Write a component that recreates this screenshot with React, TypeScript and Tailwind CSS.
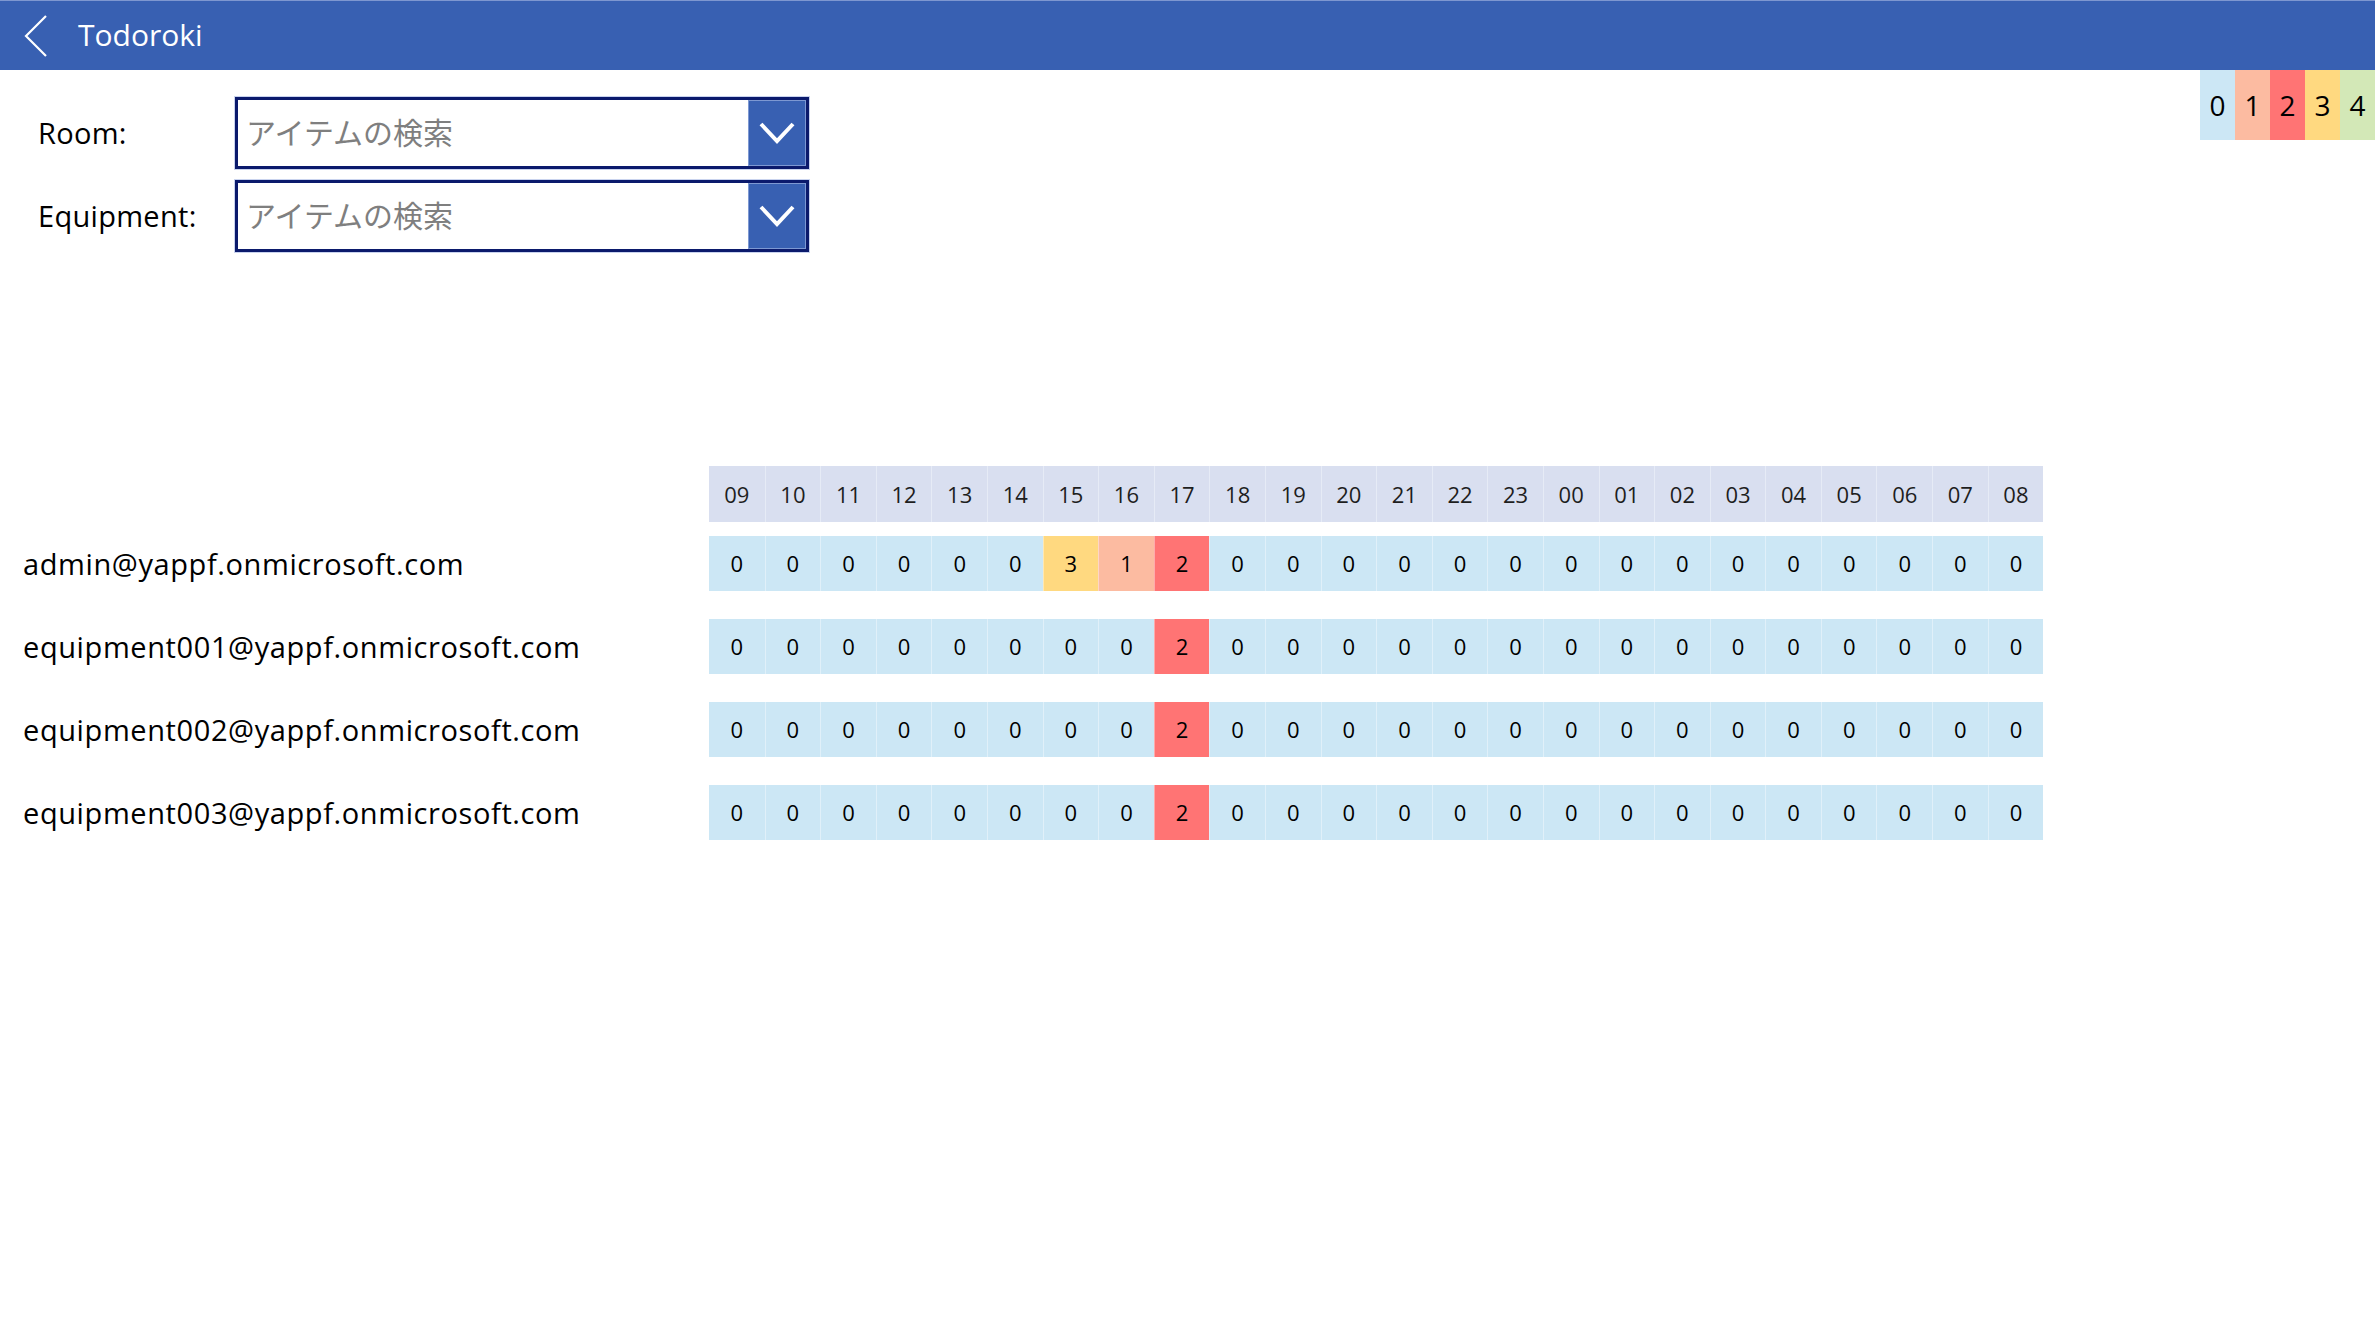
import React from 'react';

const hours = ['09', '10', '11', '12', '13', '14', '15', '16', '17', '18', '19', '20', '21', '22', '23', '00', '01', '02', '03', '04', '05', '06', '07', '08'];

// colour per count value
const levelBg: Record<number, string> = {
  0: 'bg-[#cce7f5]',
  1: 'bg-[#fcbba1]',
  2: 'bg-[#ff7474]',
  3: 'bg-[#ffd980]',
  4: 'bg-[#d3e8b7]',
};

const rows = [
  { mail: 'admin@yappf.onmicrosoft.com', values: [0, 0, 0, 0, 0, 0, 3, 1, 2, 0, 0, 0, 0, 0, 0, 0, 0, 0, 0, 0, 0, 0, 0, 0] },
  { mail: 'equipment001@yappf.onmicrosoft.com', values: [0, 0, 0, 0, 0, 0, 0, 0, 2, 0, 0, 0, 0, 0, 0, 0, 0, 0, 0, 0, 0, 0, 0, 0] },
  { mail: 'equipment002@yappf.onmicrosoft.com', values: [0, 0, 0, 0, 0, 0, 0, 0, 2, 0, 0, 0, 0, 0, 0, 0, 0, 0, 0, 0, 0, 0, 0, 0] },
  { mail: 'equipment003@yappf.onmicrosoft.com', values: [0, 0, 0, 0, 0, 0, 0, 0, 2, 0, 0, 0, 0, 0, 0, 0, 0, 0, 0, 0, 0, 0, 0, 0] },
];

const ChevronDown = () => (
  <svg width="36" height="22" viewBox="0 0 36 22" fill="none">
    <path d="M2 2 L18 19 L34 2" stroke="white" strokeWidth="4" />
  </svg>
);

const SearchBox = () => (
  <div className="flex h-[72px] w-[574px] border-[3px] border-[#0b1a6c] bg-white outline outline-1 outline-[#c9d3ee]">
    <div className="flex flex-1 items-center pb-[4px] pl-[8px] text-[30px] text-[#7f7f7f] [font-family:'Noto_Sans_CJK_JP',sans-serif]">
      アイテムの検索
    </div>
    <div className="flex w-[58px] items-center justify-center border border-[#7d98d2] bg-[#3860b2]">
      <ChevronDown />
    </div>
  </div>
);

const App = () => {
  return (
    <div className="min-h-[1336px] w-[2375px] bg-white text-black [font-family:'Open_Sans',sans-serif]">
      {/* Title bar */}
      <div className="flex h-[70px] items-center border-t border-[#7e97d0] bg-[#3860b2]">
        <svg className="ml-[24px]" width="24" height="42" viewBox="0 0 24 42" fill="none">
          <path d="M22 1 L2 21 L22 41" stroke="white" strokeWidth="2.2" />
        </svg>
        <span className="mb-[2px] ml-[30px] text-[30px] text-white">Todoroki</span>
      </div>

      <div className="flex items-start justify-between">
        {/* Filters */}
        <div className="flex flex-col gap-[11px] pt-[27px]">
          <div className="flex items-center">
            <span className="w-[235px] pl-[38px] text-[29px] tracking-[0.3px]">Room:</span>
            <SearchBox />
          </div>
          <div className="flex items-center">
            <span className="w-[235px] pl-[38px] text-[29px] tracking-[0.3px]">Equipment:</span>
            <SearchBox />
          </div>
        </div>

        {/* Legend */}
        <div className="flex h-[70px]">
          {[0, 1, 2, 3, 4].map((n) => (
            <div key={n} className={`flex w-[35px] items-center justify-center text-[28px] ${levelBg[n]}`}>
              {n}
            </div>
          ))}
        </div>
      </div>

      {/* Schedule table */}
      <div className="mt-[214px] flex flex-col">
        <div className="flex h-[56px]">
          <div className="w-[709px]" />
          {hours.map((h, i) => (
            <div
              key={h}
              className={`flex w-[55.6px] items-center justify-center bg-[#d9dff0] text-[22px] text-[#1e1e1e] ${i > 0 ? 'border-l border-[#e6ebf6]' : ''}`}
            >
              {h}
            </div>
          ))}
        </div>

        <div className="mt-[14px] flex flex-col gap-[28px]">
          {rows.map((r) => (
            <div key={r.mail} className="flex h-[55px]">
              <div className="flex w-[709px] items-center pl-[23px] text-[29px] tracking-[0.6px]">{r.mail}</div>
              {r.values.map((v, i) => (
                <div
                  key={i}
                  className={`flex w-[55.6px] items-center justify-center text-[22px] font-medium ${levelBg[v]} ${i > 0 ? 'border-l border-white/40' : ''}`}
                >
                  {v}
                </div>
              ))}
            </div>
          ))}
        </div>
      </div>
    </div>
  );
};

export default App;
